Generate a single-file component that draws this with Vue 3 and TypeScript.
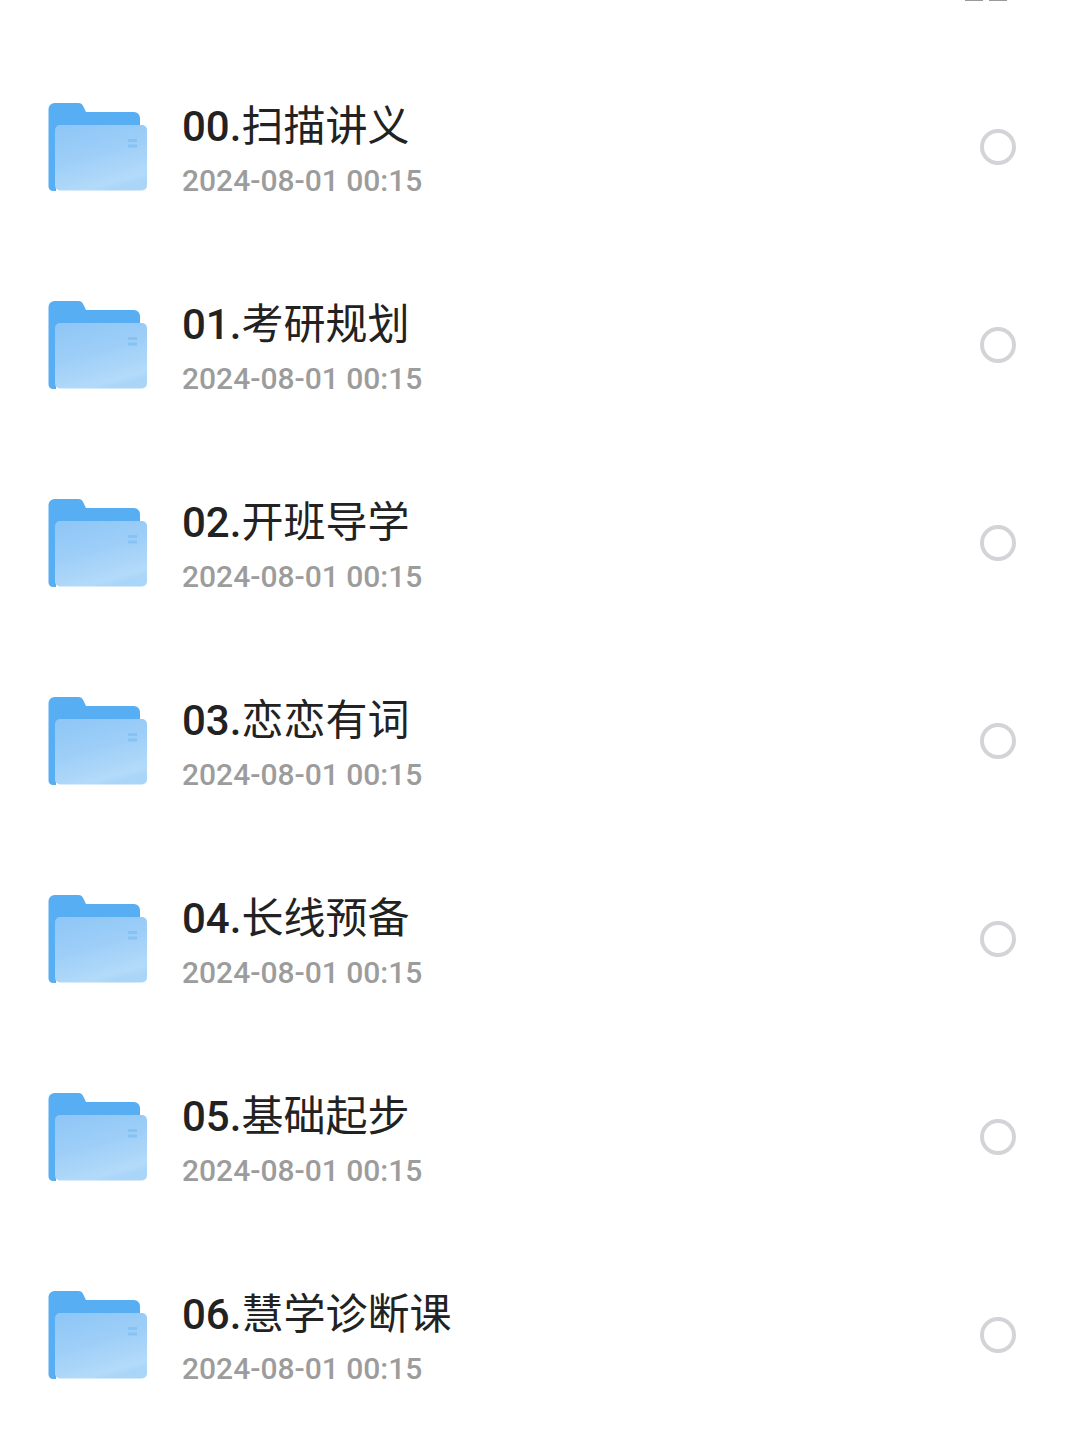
<script setup lang="ts">
interface Folder {
  prefix: string
  name: string
  time: string
}

const folders: Folder[] = [
  '扫描讲义',
  '考研规划',
  '开班导学',
  '恋恋有词',
  '长线预备',
  '基础起步',
  '慧学诊断课',
].map((name, i) => ({ prefix: `0${i}.`, name, time: '2024-08-01 00:15' }))
</script>

<template>
  <main class="page">
    <div class="top-marks">
      <span></span>
      <span></span>
    </div>
    <div class="list">
      <div class="row" v-for="(folder, i) in folders" :key="folder.prefix">
        <svg class="folder" width="100" height="88" viewBox="0 0 100 88">
          <defs>
            <linearGradient :id="`front${i}`" x1="0.2" y1="0" x2="0.6" y2="1">
              <stop offset="0" stop-color="#90c7f6" />
              <stop offset="0.45" stop-color="#9dcef8" />
              <stop offset="0.9" stop-color="#b3daf9" />
              <stop offset="1" stop-color="#a9d5f8" />
            </linearGradient>
          </defs>
          <path d="M.5 6a6 6 0 0 1 6-6h24a5 5 0 0 1 4.600 3l2.900 6h48a6 6 0 0 1 6 6v16H8v57H5a4.500 4.500 0 0 1-4.500-4.500z" fill="#58aef3" />
          <rect x="7" y="22" width="92" height="65.500" rx="5" :fill="`url(#front${i})`" />
          <rect x="80" y="36" width="9" height="3" fill="#86c3f5" />
          <rect x="80" y="41.500" width="9" height="3" fill="#86c3f5" />
        </svg>
        <div class="info">
          <div class="name"><span class="prefix">{{ folder.prefix }}</span>{{ folder.name }}</div>
          <div class="time">{{ folder.time }}</div>
        </div>
        <div class="radio"></div>
      </div>
    </div>
  </main>
</template>

<style scoped>
.page {
  position: relative;
  width: 1069px;
  height: 1449px;
  overflow: hidden;
  background: #fff;
  font-family: Roboto, "Noto Sans CJK SC", sans-serif;
}

.top-marks {
  display: flex;
  justify-content: flex-end;
  gap: 6px;
  height: 1px;
  padding-right: 62px;
}

.top-marks span {
  width: 18px;
  height: 1px;
  background: #9a9a9a;
}

.list {
  padding-top: 47px;
}

.row {
  display: flex;
  align-items: center;
  height: 198px;
  padding: 0 53px 0 48px;
}

.folder {
  flex: none;
  margin-right: 34px;
}

.info {
  flex: 1;
  padding-top: 7px;
}

.name {
  font-size: 42px;
  line-height: 50px;
  color: #222;
}

.prefix {
  font-weight: 500;
}

.time {
  margin-top: 11px;
  font-size: 30px;
  line-height: 36px;
  color: #9c9c9c;
  font-weight: 500;
}

.radio {
  flex: none;
  width: 36px;
  height: 36px;
  box-sizing: border-box;
  border: 4px solid #d4d4d8;
  border-radius: 50%;
}
</style>
